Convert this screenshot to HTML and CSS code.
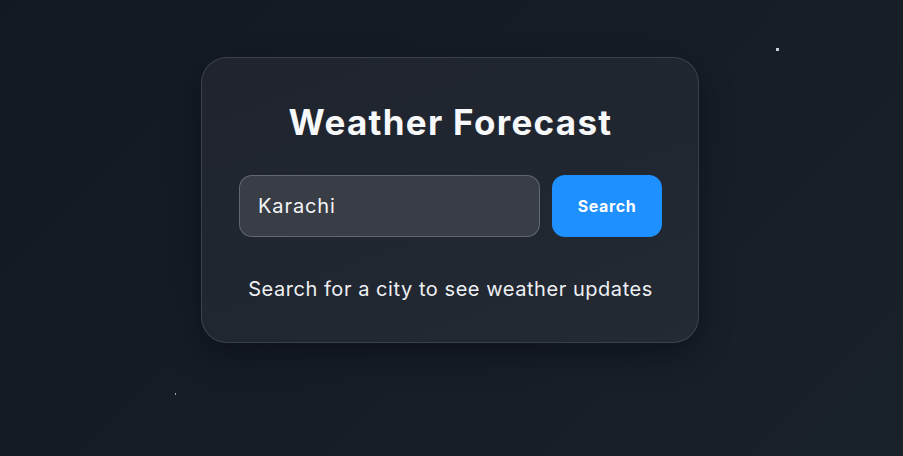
FILE: index.html
```html
<!DOCTYPE html>
<html lang="en">
<head>
<meta charset="utf-8">
<title>Weather Forecast</title>
<link rel="stylesheet" href="styles.css">
</head>
<body>
<div class="stars">
  <span class="star star-a"></span>
  <span class="star star-b"></span>
</div>
<main class="page">
  <section class="card">
    <h1 class="title">Weather Forecast</h1>
    <form class="search-row">
      <input class="city-input" type="text" value="Karachi" aria-label="City">
      <button class="search-btn" type="button">Search</button>
    </form>
    <p class="hint">Search for a city to see weather updates</p>
  </section>
</main>
</body>
</html>
```
FILE: styles.css
```css
* { box-sizing: border-box; }
html, body { height: 100%; }
body {
  margin: 0;
  font-family: Inter, "Noto Sans", sans-serif;
  color: #fff;
  background: linear-gradient(135deg, #131923 0%, #161d27 55%, #19212b 100%);
  overflow: hidden;
}
.page {
  display: flex;
  justify-content: center;
  padding: 57px 3px 0 0;
}
.card {
  width: 498px;
  height: 286px;
  padding: 38px 36px 0 37px;
  background: linear-gradient(160deg, #1f242d 0%, #212731 60%, #232a34 100%);
  border: 1px solid rgba(255, 255, 255, 0.12);
  border-radius: 26px;
  box-shadow: 0 12px 32px rgba(0, 0, 0, 0.35);
  display: flex;
  flex-direction: column;
  align-items: stretch;
}
.title {
  margin: 0;
  text-align: center;
  font-size: 35px;
  line-height: 52px;
  font-weight: 700;
  letter-spacing: 1.3px;
  color: #f7f8fa;
}
.search-row {
  margin: 27px 0 0 0;
  display: flex;
  gap: 12px;
}
.city-input {
  width: 301px;
  height: 62px;
  padding: 0 18px;
  border: 1px solid rgba(255, 255, 255, 0.22);
  border-radius: 13px;
  background: #383d46;
  color: #f4f5f7;
  font-family: Inter, "Noto Sans", sans-serif;
  font-size: 20px;
  letter-spacing: 0.9px;
  outline: none;
}
.search-btn {
  width: 110px;
  height: 62px;
  border: 0;
  border-radius: 13px;
  background: #1e90ff;
  color: #fff;
  font-family: Inter, "Noto Sans", sans-serif;
  font-size: 16px;
  font-weight: 700;
  letter-spacing: 0.6px;
}
.hint {
  margin: 38px 0 0 0;
  text-align: center;
  font-size: 20px;
  line-height: 28px;
  letter-spacing: 0.55px;
  color: #eef0f3;
}
.star {
  position: absolute;
  background: #c9ccd3;
}
.star-a { left: 776px; top: 48px; width: 3px; height: 3px; }
.star-b { left: 175px; top: 393px; width: 1px; height: 2px; background: #9aa0a8; }
```
